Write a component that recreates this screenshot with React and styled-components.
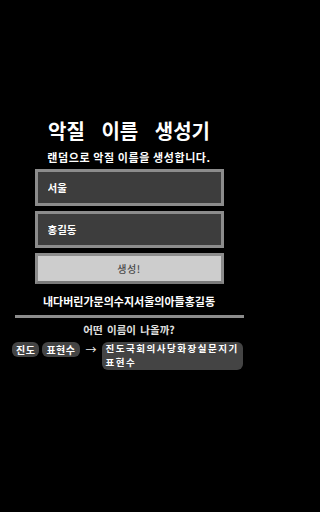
import React, { useState } from "react";
import styled, { createGlobalStyle } from "styled-components";

const Global = createGlobalStyle`
  html, body { margin: 0; padding: 0; background: #000; }
  body { font-family: "Noto Sans CJK KR", "Noto Sans", sans-serif; color: #fff; }
  * { box-sizing: border-box; }
`;

const Page = styled.div`
  width: 258px;
  min-height: 512px;
  background: #000;
  display: flex;
  flex-direction: column;
  align-items: center;
  padding-top: 118px;
`;

const Title = styled.h1`
  margin: 0;
  font-size: 20px;
  line-height: 26px;
  font-weight: 700;
  letter-spacing: 0;
  word-spacing: 12px;
  color: #fff;
`;

const Subtitle = styled.p`
  margin: 6px 0 0;
  font-size: 11px;
  line-height: 14px;
  font-weight: 700;
  letter-spacing: 0.6px;
  color: #fff;
`;

const Form = styled.div`
  width: 189px;
  margin-top: 5px;
  display: flex;
  flex-direction: column;
  gap: 5px;
`;

const Field = styled.input`
  width: 100%;
  height: 37px;
  border: 3px solid #8c8c8c;
  background: #3d3d3d;
  color: #fff;
  padding: 0 10px;
  font-family: inherit;
  font-size: 10.5px;
  font-weight: 700;
  outline: none;
  caret-color: #fff;
`;

const Button = styled.button`
  width: 100%;
  height: 31px;
  border: 3px solid #8c8c8c;
  border-bottom-color: #7a7a7a;
  background: #cdcdcd;
  color: #4a4a4a;
  font-family: inherit;
  font-size: 10px;
  font-weight: 500;
  letter-spacing: 0.5px;
  padding: 0;
`;

const Result = styled.p`
  margin: 10px 0 0;
  font-size: 11px;
  line-height: 14px;
  font-weight: 700;
  letter-spacing: 0;
  color: #fff;
`;

const Divider = styled.hr`
  width: 229px;
  height: 3px;
  margin: 7px 0 0;
  border: 0;
  background: #8c8c8c;
`;

const Question = styled.p`
  margin: 5px 0 0;
  font-size: 10.5px;
  line-height: 14px;
  font-weight: 700;
  word-spacing: 2px;
  color: #e0e0e0;
`;

const Example = styled.div`
  width: 234px;
  margin-top: 5px;
  display: flex;
  align-items: flex-start;
  gap: 3px;
`;

const Chip = styled.span`
  display: inline-block;
  background: #444;
  color: #fff;
  border-radius: 6px;
  padding: ${(p) => (p.$multi ? "0 4px" : "1px 4px")};
  font-size: ${(p) => (p.$multi ? "9.5px" : "10px")};
  line-height: ${(p) => (p.$multi ? "13.8px" : "13px")};
  font-weight: 700;
  letter-spacing: ${(p) => (p.$multi ? "1.5px" : "0.5px")};
  white-space: nowrap;
`;

const Arrow = styled.span`
  color: #eee;
  font-size: 11px;
  line-height: 15px;
  margin: 0 2px 0 3px;
`;

export default function App() {
  const [city, setCity] = useState("서울");
  const [name, setName] = useState("홍길동");
  return (
    <>
      <Global />
      <Page>
        <Title>악질 이름 생성기</Title>
        <Subtitle>랜덤으로 악질 이름을 생성합니다.</Subtitle>
        <Form>
          <Field value={city} onChange={(e) => setCity(e.target.value)} />
          <Field autoFocus value={name} onChange={(e) => setName(e.target.value)} />
          <Button>생성!</Button>
        </Form>
        <Result>내다버린가문의수지서울의아들홍길동</Result>
        <Divider />
        <Question>어떤 이름이 나올까?</Question>
        <Example>
          <Chip>진도</Chip>
          <Chip>표현수</Chip>
          <Arrow>→</Arrow>
          <Chip $multi>
            진도국회의사당화장실문지기
            <br />
            표현수
          </Chip>
        </Example>
      </Page>
    </>
  );
}
